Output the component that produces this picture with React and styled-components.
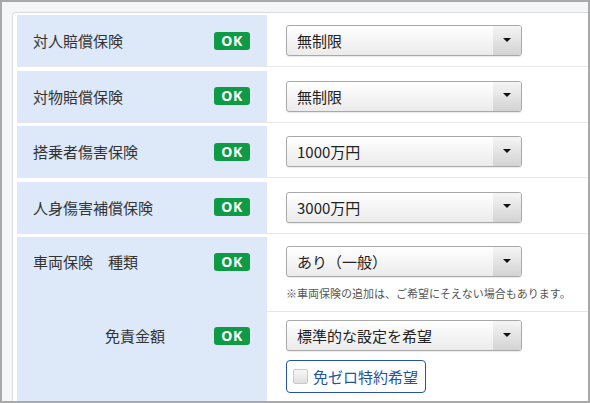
import React from 'react'
import styled, { createGlobalStyle } from 'styled-components'

const GlobalStyle = createGlobalStyle`
    * {
        box-sizing: border-box;
    }
    body {
        margin: 0;
        background: #ffffff;
        font-family: "Noto Sans CJK JP", "Noto Sans", sans-serif;
    }
`

const Frame = styled.div`
    width: 590px;
    height: 403px;
    border: 2px solid #a9a9a9;
    background-color: #f5f6f8;
    padding: 10px 0 0 10px;
    overflow: hidden;
`

const Panel = styled.div`
    background-color: #ffffff;
    border-top: 1px solid #dcdcdc;
    border-left: 1px solid #dcdcdc;
    border-top-left-radius: 4px;
    padding: 2px 0 0 4px;
    height: 100%;
`

const Row = styled.div`
    display: flex;
    height: ${p => (p.$tall ? 'auto' : '52px')};
    border-bottom: ${p => (p.$tall ? 'none' : '1px solid #e8e8e8')};
    margin-bottom: 3.5px;
`

const LabelCell = styled.div`
    width: 250px;
    flex-shrink: 0;
    background-color: #dde9f9;
    display: flex;
    flex-direction: ${p => (p.$stack ? 'column' : 'row')};
    align-items: ${p => (p.$stack ? 'stretch' : 'center')};
`

const LabelLine = styled.div`
    display: flex;
    align-items: center;
    height: 31px;
    margin-top: ${p => p.$top || 0}px;
`

const Label = styled.div`
    flex: 1;
    padding-left: ${p => p.$indent || 16}px;
    font-size: 15px;
    color: #333333;
    white-space: pre;
`

const OkBadge = styled.span`
    width: 36px;
    height: 18px;
    margin-right: 17px;
    border-radius: 3px;
    background-color: #0f9a46;
    color: #ffffff;
    font-family: "Noto Sans", "Liberation Sans", sans-serif;
    font-weight: 700;
    font-size: 14px;
    line-height: 18px;
    text-align: center;
    letter-spacing: 0.5px;
`

const ValueCell = styled.div`
    flex: 1;
    display: flex;
    flex-direction: ${p => (p.$stack ? 'column' : 'row')};
    align-items: ${p => (p.$stack ? 'stretch' : 'center')};
    padding-left: ${p => (p.$stack ? 0 : 19)}px;
`

const SubBlock = styled.div`
    padding: ${p => p.$top}px 0 ${p => p.$bottom}px 19px;
    border-bottom: ${p => (p.$line ? '1px solid #e6e6e6' : 'none')};
`

const Select = styled.div`
    width: 236px;
    height: 31px;
    display: flex;
    border: 1px solid #a9a9a9;
    border-radius: 3px;
    background: linear-gradient(#ffffff, #ebebeb);
    overflow: hidden;
    box-shadow: 0 1px 1px rgba(0, 0, 0, 0.08);
`

const SelectText = styled.div`
    flex: 1;
    padding-left: 10px;
    font-size: 15px;
    line-height: 29px;
    color: #222222;
`

const SelectArrow = styled.div`
    width: 28px;
    display: flex;
    align-items: center;
    justify-content: center;
    background: linear-gradient(#f5f5f5, #d3d3d3);

    &::after {
        content: '';
        border-left: 4px solid transparent;
        border-right: 4px solid transparent;
        border-top: 4px solid #111111;
        margin-top: -2px;
    }
`

const Note = styled.div`
    margin-top: 8px;
    font-size: 11px;
    line-height: 16px;
    color: #555555;
    white-space: nowrap;
`

const CheckButton = styled.div`
    margin-top: 9px;
    width: 140px;
    height: 33px;
    display: flex;
    align-items: center;
    gap: 5px;
    padding-left: 6px;
    border: 1.5px solid #25559f;
    border-radius: 4px;
    background-color: #ffffff;
    font-size: 15px;
    color: #25539b;
`

const CheckBox = styled.span`
    width: 15px;
    height: 15px;
    border: 1px solid #c9c9c9;
    border-radius: 2px;
    background: linear-gradient(#f8f8f8, #dedede);
`

const SelectBox = ({ value }) => (
    <Select>
        <SelectText>{value}</SelectText>
        <SelectArrow />
    </Select>
)

const rows = [
    { label: '対人賠償保険', value: '無制限' },
    { label: '対物賠償保険', value: '無制限' },
    { label: '搭乗者傷害保険', value: '1000万円' },
    { label: '人身傷害補償保険', value: '3000万円' },
]

const App = () => {
    return (
        <>
            <GlobalStyle />
            <Frame>
                <Panel>
                    {rows.map(r => (
                        <Row key={r.label}>
                            <LabelCell>
                                <Label>{r.label}</Label>
                                <OkBadge>OK</OkBadge>
                            </LabelCell>
                            <ValueCell>
                                <SelectBox value={r.value} />
                            </ValueCell>
                        </Row>
                    ))}
                    <Row $tall>
                        <LabelCell $stack>
                            <LabelLine $top={9}>
                                <Label>{'車両保険　種類'}</Label>
                                <OkBadge>OK</OkBadge>
                            </LabelLine>
                            <LabelLine $top={43}>
                                <Label $indent={88}>免責金額</Label>
                                <OkBadge>OK</OkBadge>
                            </LabelLine>
                            <div style={{ height: 60 }} />
                        </LabelCell>
                        <ValueCell $stack>
                            <SubBlock $top={9} $bottom={10} $line>
                                <SelectBox value="あり（一般）" />
                                <Note>※車両保険の追加は、ご希望にそえない場合もあります。</Note>
                            </SubBlock>
                            <SubBlock $top={8} $bottom={10}>
                                <SelectBox value="標準的な設定を希望" />
                                <CheckButton>
                                    <CheckBox />
                                    免ゼロ特約希望
                                </CheckButton>
                            </SubBlock>
                        </ValueCell>
                    </Row>
                </Panel>
            </Frame>
        </>
    )
}

export default App
